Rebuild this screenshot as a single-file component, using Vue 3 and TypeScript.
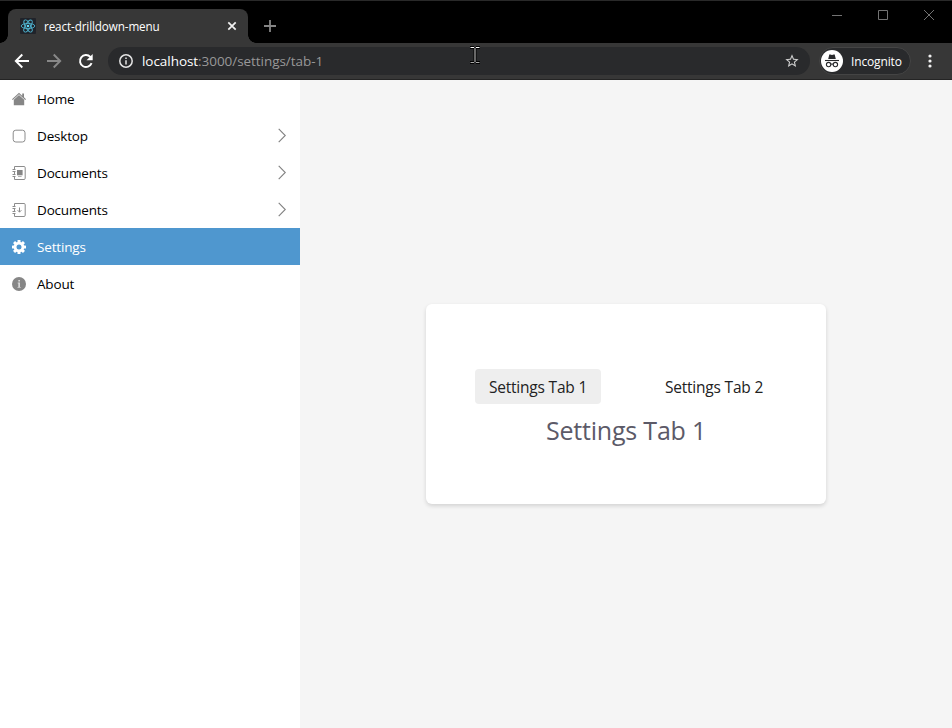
<script setup lang="ts">
import { ref } from 'vue'

type IconName = 'home' | 'square' | 'contacts' | 'download' | 'gear' | 'info'

interface MenuItem {
  id: number
  label: string
  icon: IconName
  hasChildren: boolean
}

const items: MenuItem[] = [
  { id: 1, label: 'Home', icon: 'home', hasChildren: false },
  { id: 2, label: 'Desktop', icon: 'square', hasChildren: true },
  { id: 3, label: 'Documents', icon: 'contacts', hasChildren: true },
  { id: 4, label: 'Documents', icon: 'download', hasChildren: true },
  { id: 5, label: 'Settings', icon: 'gear', hasChildren: false },
  { id: 6, label: 'About', icon: 'info', hasChildren: false },
]
const activeItem = ref(5)

const tabs = ['Settings Tab 1', 'Settings Tab 2']
const activeTab = ref(tabs[0])

const gearTeeth = [0, 45, 90, 135, 180, 225, 270, 315]
</script>

<template>
  <div class="window">
    <header class="titlebar">
      <div class="browser-tab">
        <svg class="favicon" viewBox="0 0 16 16">
          <rect width="16" height="16" rx="1" fill="#20232a" />
          <g fill="none" stroke="#4fb4d0" stroke-width="0.9">
            <ellipse cx="8" cy="8" rx="6.8" ry="2.6" />
            <ellipse cx="8" cy="8" rx="6.8" ry="2.6" transform="rotate(60 8 8)" />
            <ellipse cx="8" cy="8" rx="6.8" ry="2.6" transform="rotate(120 8 8)" />
          </g>
          <circle cx="8" cy="8" r="1.3" fill="#61dafb" />
        </svg>
        <span class="tab-title">react-drilldown-menu</span>
        <svg class="tab-close" viewBox="0 0 10 10"><path d="M1.3 1.3 8.7 8.7M8.7 1.3 1.3 8.7" /></svg>
      </div>
      <svg class="new-tab" viewBox="0 0 12 12"><path d="M6 0V12M0 6H12" /></svg>
      <div class="window-controls">
        <svg viewBox="0 0 10 10"><path d="M0 5.5H10" /></svg>
        <svg viewBox="0 0 10 10"><path d="M.5 .5H9.5V9.5H.5Z" /></svg>
        <svg viewBox="0 0 10 10"><path d="M0 0 10 10M10 0 0 10" /></svg>
      </div>
    </header>

    <div class="toolbar">
      <svg class="nav" viewBox="0 0 16 16"><path d="M15 8H2M8.3 1.5 1.8 8 8.3 14.5" /></svg>
      <svg class="nav dim" viewBox="0 0 16 16"><path d="M1 8H14M7.7 1.5 14.2 8 7.7 14.5" /></svg>
      <svg class="nav" viewBox="0 0 16 16">
        <path d="M13.6 10.2A6 6 0 1 1 12.3 3.8L13.4 5" />
        <path class="solid" d="M14.7 1V7.2H8.5Z" />
      </svg>
      <div class="omnibox">
        <svg class="site-info" viewBox="0 0 14 14">
          <circle cx="7" cy="7" r="6.2" />
          <path d="M7 6.2V10.4M7 3.5V5" />
        </svg>
        <span class="url"><span class="host">localhost</span>:3000/settings/tab-1</span>
        <svg class="star" viewBox="0 0 24 24">
          <path d="M22 9.24l-7.19-.62L12 2 9.19 8.63 2 9.24l5.46 4.73L5.82 21 12 17.27 18.18 21l-1.63-7.03L22 9.24zM12 15.4l-3.76 2.27 1-4.28-3.32-2.88 4.38-.38L12 6.1l1.71 4.04 4.38.38-3.32 2.88 1 4.28L12 15.4z" />
        </svg>
      </div>
      <div class="incognito">
        <svg class="incognito-icon" viewBox="0 0 22 22">
          <circle cx="11" cy="11" r="11" fill="#fff" />
          <path d="M7.2 9 8.2 4.9Q8.5 4.2 9.2 4.4L11 4.9 12.8 4.4Q13.5 4.2 13.8 4.9L14.8 9Z" fill="#292a2d" />
          <path d="M4 10.5H18" stroke="#292a2d" stroke-width="1.1" />
          <g fill="none" stroke="#292a2d" stroke-width="1.1">
            <circle cx="7.6" cy="14.6" r="2.2" />
            <circle cx="14.4" cy="14.6" r="2.2" />
            <path d="M9.8 14.3Q11 13.6 12.2 14.3" />
          </g>
        </svg>
        <span>Incognito</span>
      </div>
      <svg class="kebab" viewBox="0 0 4 14">
        <circle cx="2" cy="2" r="1.6" /><circle cx="2" cy="7" r="1.6" /><circle cx="2" cy="12" r="1.6" />
      </svg>
    </div>

    <div class="page">
      <nav class="menu">
        <a
          v-for="item in items"
          :key="item.id"
          class="menu-item"
          :class="{ active: item.id === activeItem }"
          @click="activeItem = item.id"
        >
          <svg class="item-icon" viewBox="0 0 14 14">
            <template v-if="item.icon === 'home'">
              <path class="fill" d="M7 .8 0 7.2 .8 8 7 2.2 13.2 8 14 7.2 12 5.3V1.4H10.2V3.7Z" />
              <path class="fill" d="M7 2.9 1.8 7.8V13.2H12.2V7.8Z" />
            </template>
            <rect v-else-if="item.icon === 'square'" class="line" x="1.2" y="1.2" width="11.8" height="11.8" rx="2.6" />
            <template v-else-if="item.icon === 'contacts'">
              <path class="line" d="M2.5 3V.5H12Q13.2 .5 13.2 1.7V12.3Q13.2 13.5 12 13.5H2.5V11" />
              <path class="line" d="M.5 3.5H3.5M.5 5.5H3.5M.5 8.5H3.5M.5 10.5H3.5M2.5 5.5V8.5" />
              <path class="fill" d="M5 4H10.6V9.3H5Z" />
              <path class="faint" d="M6 10H9.6V11H6Z" />
            </template>
            <template v-else-if="item.icon === 'download'">
              <path class="line" d="M2.5 3V.5H12Q13.2 .5 13.2 1.7V12.3Q13.2 13.5 12 13.5H2.5V11" />
              <path class="line" d="M.5 3.5H3.5M.5 5.5H3.5M.5 8.5H3.5M.5 10.5H3.5M2.5 5.5V8.5" />
              <path class="line" d="M7.5 4.5V9.2M5.6 7.2 7.5 9.1 9.4 7.2" />
            </template>
            <template v-else-if="item.icon === 'gear'">
              <rect
                v-for="angle in gearTeeth"
                :key="angle"
                class="fill"
                x="5.5"
                y="0"
                width="3"
                height="4"
                rx=".5"
                :transform="`rotate(${angle} 7 7)`"
              />
              <circle class="gear-ring" cx="7" cy="7" r="3.9" />
            </template>
            <template v-else>
              <circle class="fill" cx="7" cy="7" r="7" />
              <path class="knockout" d="M6.3 3H8V4.5H6.3ZM5.7 5.6H8V9.9H8.7V10.8H5.5V9.9H6.3V6.4H5.7Z" />
            </template>
          </svg>
          <span class="label">{{ item.label }}</span>
          <svg v-if="item.hasChildren" class="chevron" viewBox="0 0 8 15"><path d="M.7 .8 7.3 7.5 .7 14.2" /></svg>
        </a>
      </nav>

      <main class="content">
        <section class="card">
          <div class="tabs">
            <div v-for="tab in tabs" :key="tab" class="tab-cell">
              <button class="tab" :class="{ selected: tab === activeTab }" @click="activeTab = tab">{{ tab }}</button>
            </div>
          </div>
          <h1>{{ activeTab }}</h1>
        </section>
      </main>
    </div>

    <svg class="cursor" viewBox="0 0 12 18">
      <path d="M1 1.5H5M7 1.5H11M6 2V16M1 16.5H5M7 16.5H11" stroke="#000" stroke-width="3" />
      <path d="M1.5 1.5H5M7 1.5H10.5" stroke="#fff" />
      <path d="M6 2V16" stroke="#d0d0d0" />
      <path d="M1.5 16.5H5M7 16.5H10.5" stroke="#a8a8a8" />
    </svg>
  </div>
</template>

<style>
body {
  margin: 0;
  overflow: hidden;
}
</style>

<style scoped>
.window {
  position: relative;
  box-sizing: border-box;
  display: flex;
  flex-direction: column;
  width: 952px;
  height: 728px;
  font-family: "Segoe UI", "Open Sans", "Noto Sans", sans-serif;
  color: #000;
}

svg {
  display: block;
  flex: none;
}

.titlebar {
  box-sizing: border-box;
  display: flex;
  align-items: flex-start;
  height: 43px;
  padding: 8px 18px 0 8px;
  border-top: 1px solid #292929;
  background: #000;
}

.browser-tab {
  position: relative;
  box-sizing: border-box;
  display: flex;
  align-items: center;
  width: 240px;
  height: 34px;
  padding: 0 11px 0 12px;
  border-radius: 8px 8px 0 0;
  background: #373737;
}

.browser-tab::before,
.browser-tab::after {
  content: "";
  position: absolute;
  bottom: 0;
  width: 8px;
  height: 8px;
}

.browser-tab::before {
  left: -8px;
  background: radial-gradient(circle at 0 0, transparent 7.5px, #373737 8px);
}

.browser-tab::after {
  right: -8px;
  background: radial-gradient(circle at 100% 0, transparent 7.5px, #373737 8px);
}

.favicon {
  width: 16px;
  height: 16px;
  margin-right: 8px;
}

.tab-title {
  flex: 1;
  font-size: 11.7px;
  letter-spacing: -0.12px;
  white-space: nowrap;
  color: #fff;
}

.tab-close {
  width: 10px;
  height: 10px;
  fill: none;
  stroke: #f1f1f1;
  stroke-width: 1.7;
}

.new-tab {
  width: 12px;
  height: 12px;
  margin: 11px 0 0 16px;
  fill: none;
  stroke: #858585;
  stroke-width: 1.8;
}

.window-controls {
  display: flex;
  gap: 36px;
  margin: 1px 0 0 auto;
}

.window-controls svg {
  width: 10px;
  height: 10px;
  fill: none;
  stroke: #737373;
  stroke-width: 1;
}

.toolbar {
  box-sizing: border-box;
  display: flex;
  align-items: center;
  height: 37px;
  padding: 0 20px 0 14px;
  border-bottom: 1px solid #242424;
  background: #373737;
}

.nav {
  width: 16px;
  height: 16px;
  margin-right: 16px;
  fill: none;
  stroke: #fff;
  stroke-width: 1.9;
}

.nav.dim {
  stroke: #888;
}

.nav:nth-child(3) {
  margin-right: 14px;
}

.nav .solid {
  fill: #fff;
  stroke: none;
}

.omnibox {
  box-sizing: border-box;
  display: flex;
  align-items: center;
  width: 702px;
  height: 28px;
  padding: 0 10px 0 11px;
  border-radius: 14px;
  background: #292a2c;
}

.site-info {
  width: 14px;
  height: 14px;
  margin-right: 9px;
  fill: none;
  stroke: #e4e4e4;
  stroke-width: 1.5;
}

.url {
  flex: 1;
  font-size: 13.5px;
  letter-spacing: -0.05px;
  white-space: nowrap;
  color: #989898;
}

.host {
  color: #fff;
}

.star {
  width: 16px;
  height: 16px;
  fill: #d0d0d0;
}

.incognito {
  box-sizing: border-box;
  display: flex;
  align-items: center;
  gap: 8px;
  width: 92px;
  height: 28px;
  margin-left: 9px;
  padding-left: 1px;
  border: 1px solid #444;
  border-radius: 14px;
  background: #292a2c;
  font-size: 12px;
  letter-spacing: -0.15px;
  color: #fff;
}

.incognito-icon {
  width: 22px;
  height: 22px;
}

.kebab {
  width: 4px;
  height: 14px;
  margin-left: auto;
  fill: #f1f1f1;
}

.page {
  display: flex;
  flex: 1;
  min-height: 0;
}

.menu {
  width: 300px;
  background: #fff;
}

.menu-item {
  box-sizing: border-box;
  display: flex;
  align-items: center;
  height: 37px;
  padding: 0 14px 0 12px;
  font-size: 13.5px;
  letter-spacing: -0.17px;
  cursor: default;
}

.item-icon {
  width: 14px;
  height: 14px;
  margin: 1px 11px 0 0;
}

.label {
  flex: 1;
}

.fill {
  fill: #868686;
}

.faint {
  fill: #b5b5b5;
}

.line {
  fill: none;
  stroke: #8c8c8c;
  stroke-width: 1;
}

.knockout {
  fill: #d8d8d8;
}

.gear-ring {
  fill: none;
  stroke: #868686;
  stroke-width: 2.8;
}

.chevron {
  width: 8px;
  height: 15px;
  fill: none;
  stroke: #808080;
  stroke-width: 1.1;
}

.active {
  background: #4f97cf;
  color: #fff;
}

.active .fill {
  fill: #fff;
}

.active .gear-ring {
  stroke: #fff;
}

.content {
  display: flex;
  flex: 1;
  align-items: center;
  justify-content: center;
  background: #f5f5f5;
}

.card {
  box-sizing: border-box;
  width: 400px;
  height: 200px;
  padding: 65px 24px 0;
  border-radius: 6px;
  background: #fff;
  box-shadow: 0 2px 4px rgba(0, 0, 0, 0.14);
  text-align: center;
}

.tabs {
  display: flex;
}

.tab-cell {
  flex: 1;
}

.tab {
  width: 126px;
  height: 35px;
  padding: 2px 0 0;
  border: 0;
  border-radius: 4px;
  background: transparent;
  font: 15.5px/33px "Segoe UI", "Open Sans", "Noto Sans", sans-serif;
  letter-spacing: -0.2px;
  color: #222;
}

.tab.selected {
  background: #eee;
}

h1 {
  margin: 8px 0 0;
  font-size: 25px;
  font-weight: 400;
  line-height: 36px;
  letter-spacing: -0.2px;
  color: #5c5a68;
}

.cursor {
  position: absolute;
  top: 46px;
  left: 469px;
  width: 12px;
  height: 18px;
}
</style>
